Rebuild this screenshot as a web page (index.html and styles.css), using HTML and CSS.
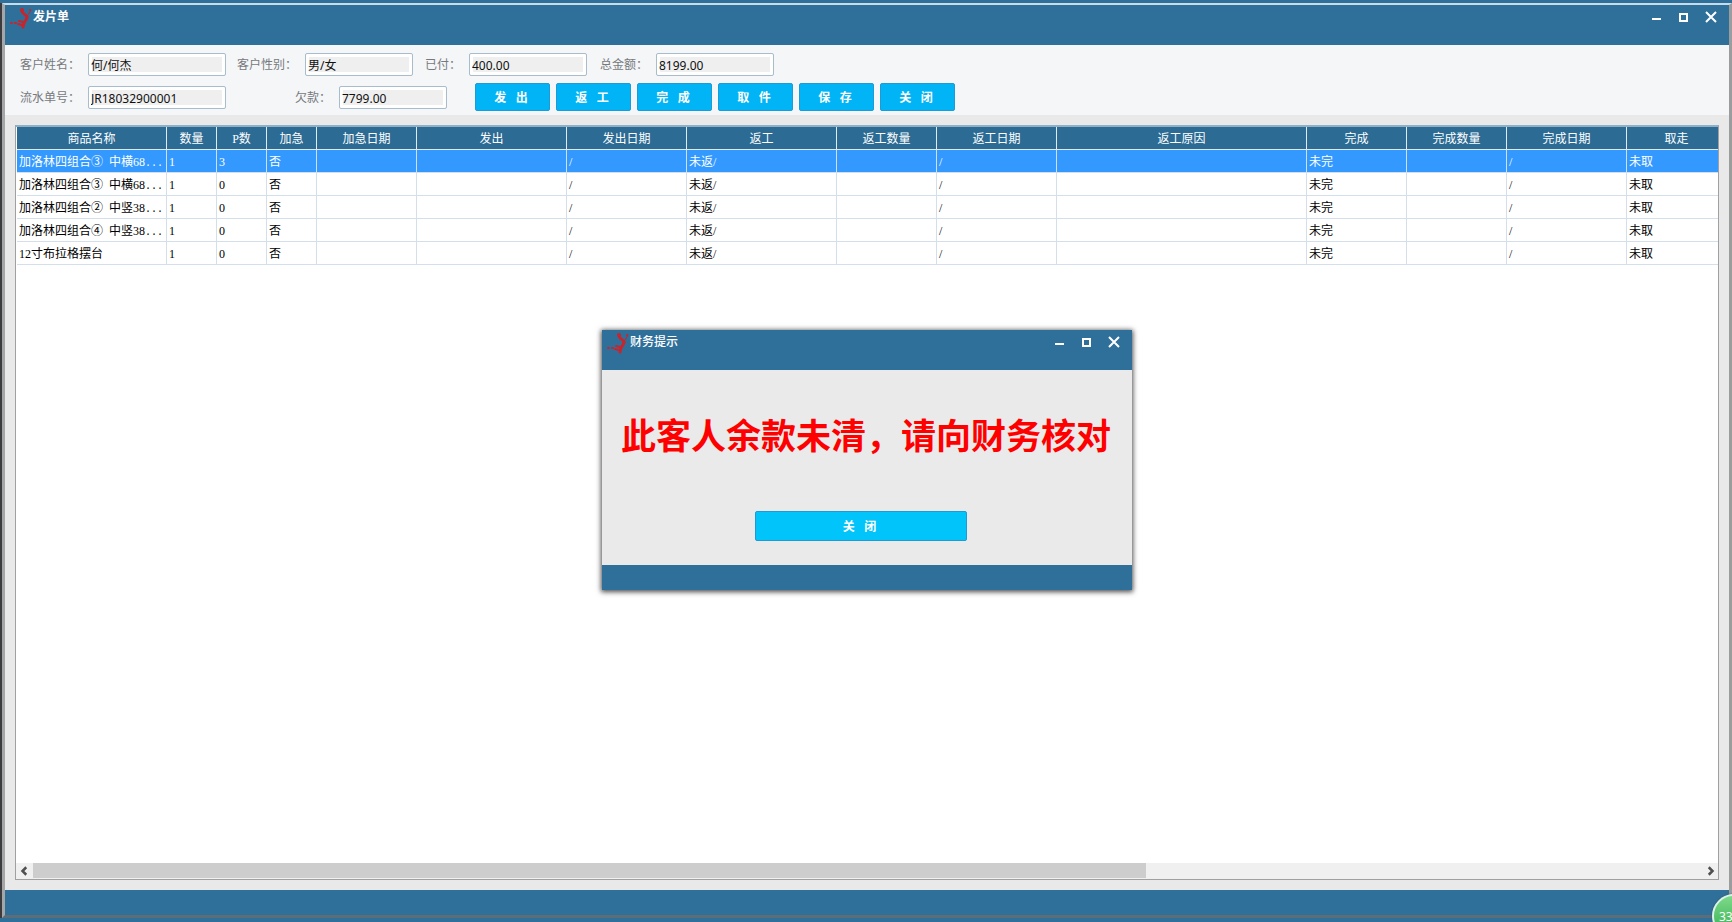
FILE: index.html
```
<!DOCTYPE html>
<html lang="zh-CN">
<head>
    <meta charset="UTF-8">
    <meta name="viewport" content="width=device-width, initial-scale=1.0">
    <title>发片单</title>
    <link rel="stylesheet" href="styles.css">
</head>
<body>
    <svg width="0" height="0" class="symbols">
        <symbol id="logo" viewBox="0 0 22 22">
            <g fill="none" stroke="#c9242b" stroke-linecap="round">
                <path d="M12 3c0 3 5 4 5 6" stroke-width="3"/>
                <path d="M17 9c0 4-4 4-4 10" stroke-width="3"/>
                <path d="M9 13l4 1" stroke-width="2"/>
                <path d="M1 15h1M5 15h1M8 16l4 1" stroke-width="2"/>
                <path d="M18 7l3-5" stroke-width="1"/>
            </g>
            <circle cx="12" cy="2" r="2" fill="#c9242b"/>
            <circle cx="20" cy="2" r="1" fill="#c9242b"/>
        </symbol>
        <symbol id="min" viewBox="0 0 12 12">
            <path d="M1 8h9" stroke="#fff" stroke-width="2"/>
        </symbol>
        <symbol id="max" viewBox="0 0 12 12">
            <rect x="2" y="3" width="7" height="7" fill="none" stroke="#fff" stroke-width="2"/>
        </symbol>
        <symbol id="close" viewBox="0 0 12 12">
            <path d="M1 1l10 10M11 1L1 11" stroke="#fff" stroke-width="2"/>
        </symbol>
    </svg>

    <div class="window">
        <header class="titlebar">
            <svg class="logo"><use href="#logo"/></svg>
            <h1>发片单</h1>
            <div class="controls">
                <button aria-label="最小化"><svg><use href="#min"/></svg></button>
                <button aria-label="最大化"><svg><use href="#max"/></svg></button>
                <button aria-label="关闭窗口"><svg><use href="#close"/></svg></button>
            </div>
        </header>

        <form class="info">
            <div class="row">
                <label class="first" for="name">客户姓名：</label>
                <input class="wide" id="name" type="text" value="何/何杰" readonly>
                <label class="sex" for="sex">客户性别：</label>
                <input class="narrow" id="sex" type="text" value="男/女" readonly>
                <label class="paid" for="paid">已付：</label>
                <input class="medium" id="paid" type="text" value="400.00" readonly>
                <label class="total" for="total">总金额：</label>
                <input class="medium" id="total" type="text" value="8199.00" readonly>
            </div>
            <div class="row">
                <label class="first" for="order">流水单号：</label>
                <input class="wide" id="order" type="text" value="JR18032900001" readonly>
                <label class="debt" for="debt">欠款：</label>
                <input class="narrow" id="debt" type="text" value="7799.00" readonly>
                <div class="actions">
                    <button type="button" class="btn">发   出</button>
                    <button type="button" class="btn">返   工</button>
                    <button type="button" class="btn">完   成</button>
                    <button type="button" class="btn">取   件</button>
                    <button type="button" class="btn">保   存</button>
                    <button type="button" class="btn">关   闭</button>
                </div>
            </div>
        </form>

        <main class="content">
            <div class="grid">
                <div class="grid-view">
                    <table>
                        <colgroup>
                            <col class="w150"><col class="w50"><col class="w50"><col class="w50">
                            <col class="w100"><col class="w150"><col class="w120"><col class="w150">
                            <col class="w100"><col class="w120"><col class="w250"><col class="w100">
                            <col class="w100"><col class="w120"><col class="w100">
                        </colgroup>
                        <thead>
                            <tr>
                                <th>商品名称</th><th>数量</th><th>P数</th><th>加急</th><th>加急日期</th>
                                <th>发出</th><th>发出日期</th><th>返工</th><th>返工数量</th><th>返工日期</th>
                                <th>返工原因</th><th>完成</th><th>完成数量</th><th>完成日期</th><th>取走</th>
                            </tr>
                        </thead>
                        <tbody>
                            <tr class="selected">
                                <td>加洛林四组合③<span class="half"> </span>中横68<span class="half">...</span></td><td>1</td><td>3</td><td>否</td><td></td>
                                <td></td><td>/</td><td>未返/</td><td></td><td>/</td>
                                <td></td><td>未完</td><td></td><td>/</td><td>未取</td>
                            </tr>
                            <tr>
                                <td>加洛林四组合③<span class="half"> </span>中横68<span class="half">...</span></td><td>1</td><td>0</td><td>否</td><td></td>
                                <td></td><td>/</td><td>未返/</td><td></td><td>/</td>
                                <td></td><td>未完</td><td></td><td>/</td><td>未取</td>
                            </tr>
                            <tr>
                                <td>加洛林四组合②<span class="half"> </span>中竖38<span class="half">...</span></td><td>1</td><td>0</td><td>否</td><td></td>
                                <td></td><td>/</td><td>未返/</td><td></td><td>/</td>
                                <td></td><td>未完</td><td></td><td>/</td><td>未取</td>
                            </tr>
                            <tr>
                                <td>加洛林四组合④<span class="half"> </span>中竖38<span class="half">...</span></td><td>1</td><td>0</td><td>否</td><td></td>
                                <td></td><td>/</td><td>未返/</td><td></td><td>/</td>
                                <td></td><td>未完</td><td></td><td>/</td><td>未取</td>
                            </tr>
                            <tr>
                                <td>12寸布拉格摆台</td><td>1</td><td>0</td><td>否</td><td></td>
                                <td></td><td>/</td><td>未返/</td><td></td><td>/</td>
                                <td></td><td>未完</td><td></td><td>/</td><td>未取</td>
                            </tr>
                        </tbody>
                    </table>
                </div>
                <div class="scrollbar">
                    <button aria-label="向左滚动"><svg viewBox="0 0 8 8"><path d="M5 1L2 4l3 3"/></svg></button>
                    <div class="track"><div class="thumb"></div></div>
                    <button aria-label="向右滚动"><svg viewBox="0 0 8 8"><path d="M3 1l3 3-3 3"/></svg></button>
                </div>
            </div>
        </main>

        <footer class="statusbar"></footer>
    </div>

    <div class="dialog" role="dialog" aria-labelledby="dialog-title">
        <header class="titlebar">
            <svg class="logo"><use href="#logo"/></svg>
            <h2 id="dialog-title">财务提示</h2>
            <div class="controls">
                <button aria-label="最小化"><svg><use href="#min"/></svg></button>
                <button aria-label="最大化"><svg><use href="#max"/></svg></button>
                <button aria-label="关闭窗口"><svg><use href="#close"/></svg></button>
            </div>
        </header>
        <div class="dialog-body">
            <p>此客人余款未清，请向财务核对</p>
            <button type="button" class="btn">关   闭</button>
        </div>
        <footer class="statusbar"></footer>
    </div>

    <div class="badge">33</div>
</body>
</html>
```

FILE: styles.css
```
* {
    box-sizing: border-box;
}
body {
    display: flex;
    flex-direction: column;
    height: 100vh;
    margin: 0;
    padding: 3px 0 4px;
    overflow: hidden;
    position: relative;
    background: #2f709b;
    font-family: "Noto Sans", "Noto Sans CJK SC", sans-serif;
    font-size: 12px;
}
button, input {
    font-family: inherit;
    font-size: 12px;
}
.symbols {
    position: absolute;
}

/* main window */
.window {
    flex: 1;
    display: flex;
    flex-direction: column;
    border: solid;
    border-width: 2px 3px 3px;
    border-color: #c9dbe8 #9a9c9e #5d6d78 #a4a6a8;
    margin-left: 2px;
    box-shadow: -2px 0 0 #3c3c3e;
    background: #e9e9e9;
}
.titlebar {
    display: flex;
    height: 40px;
    padding: 3px 7px 0 5px;
    background: #2f709b;
    color: #fff;
}
.logo {
    width: 22px;
    height: 22px;
}
.titlebar h1,
.titlebar h2 {
    margin: 0 0 0 1px;
    font-size: 12px;
    line-height: 18px;
}
.titlebar h2 {
    font-weight: 500;
}
.controls {
    display: flex;
    gap: 5px;
    margin-left: auto;
}
.controls button {
    width: 22px;
    height: 18px;
    padding: 0;
    border: 0;
    background: none;
}
.controls svg {
    display: block;
    width: 12px;
    height: 12px;
    margin: auto;
}
.info {
    display: flex;
    flex-direction: column;
    gap: 5px;
    height: 70px;
    padding: 5px 15px 0;
    background: #f4f6f8;
}
.row {
    display: flex;
    align-items: center;
    height: 28px;
}
.row label {
    color: #77797c;
    white-space: nowrap;
}
.row input {
    height: 23px;
    padding: 2px 2px 0;
    border: 1px solid #a9bccb;
    border-radius: 2px;
    background: #efefef;
    box-shadow: inset 0 0 0 3px #fff;
    color: #111;
}
.row .first {
    width: 68px;
}
.row .wide {
    width: 138px;
}
.row .narrow {
    width: 108px;
}
.row .medium {
    width: 118px;
}
.sex {
    width: 79px;
    padding-left: 11px;
}
.paid {
    width: 56px;
    padding-left: 12px;
}
.total {
    width: 69px;
    padding-left: 13px;
}
.debt {
    width: 113px;
    padding-left: 69px;
}
.actions {
    display: flex;
    gap: 6px;
    margin-left: 28px;
}
.btn {
    width: 75px;
    height: 28px;
    padding: 0 3px 0 0;
    border: 1px solid #1e9ad6;
    border-radius: 2px;
    background: #00b4f5;
    color: #fff;
    font-weight: bold;
    white-space: pre;
    cursor: pointer;
}

/* table */
.content {
    flex: 1;
    display: flex;
    min-height: 0;
    padding: 10px;
}
.grid {
    flex: 1;
    display: flex;
    flex-direction: column;
    min-width: 0;
    border: 1px solid #a0a0a0;
    border-top: 2px solid #8fb0c6;
    background: #fff;
}
.grid-view {
    flex: 1;
    padding-left: 1px;
    overflow: hidden;
}
table {
    width: 1710px;
    table-layout: fixed;
    border-collapse: separate;
    border-spacing: 0;
    font-family: "Liberation Serif", "Noto Sans CJK SC", serif;
}
.w50 { width: 50px; }
.w100 { width: 100px; }
.w120 { width: 120px; }
.w150 { width: 150px; }
.w250 { width: 250px; }
th, td {
    height: 23px;
    padding: 2px 2px 0;
    overflow: hidden;
    border-right: 1px solid #d3dfea;
    border-bottom: 1px solid #d3dfea;
    line-height: 20px;
    white-space: nowrap;
    text-align: left;
}
th {
    border-color: #dfeaf2;
    background: #2b6b94;
    color: #fff;
    font-weight: normal;
    text-align: center;
}
.selected td {
    background: #3399ff;
    color: #fff;
}
.half {
    font-family: "Liberation Mono", monospace;
    font-size: 10px;
    line-height: 12px;
    white-space: pre;
}
.scrollbar {
    display: flex;
    height: 16px;
    background: #f0f0f0;
}
.scrollbar button {
    width: 17px;
    padding: 0;
    border: 0;
    background: none;
}
.scrollbar svg {
    display: block;
    width: 10px;
    height: 10px;
    margin: auto;
    fill: none;
    stroke: #505050;
    stroke-width: 2;
}
.track {
    flex: 1;
}
.thumb {
    width: 66.7%;
    height: 15px;
    background: #cdcdcd;
}
.statusbar {
    height: 25px;
    background: #2f709b;
}

/* popup */
.dialog {
    position: absolute;
    top: 330px;
    left: 602px;
    width: 530px;
    box-shadow: 0 1px 5px 1px rgba(0, 0, 0, 0.7);
}
.dialog-body {
    display: flex;
    flex-direction: column;
    align-items: center;
    height: 195px;
    padding: 42px 12px 0 0;
    background: #eaeaea;
}
.dialog-body p {
    margin: 0 0 51px 10px;
    color: #f00;
    font-size: 35px;
    font-weight: bold;
    line-height: 48px;
    white-space: nowrap;
}
.dialog-body .btn {
    width: 212px;
    height: 30px;
    background: #00c4fa;
}

.badge {
    position: absolute;
    right: -24px;
    bottom: -16px;
    width: 44px;
    height: 44px;
    padding-left: 5px;
    border: 2px solid #d8f3ea;
    border-radius: 50%;
    background: linear-gradient(#7fd98a, #2fae4c);
    box-shadow: 0 0 2px #444;
    color: #fff;
    line-height: 42px;
}
```
